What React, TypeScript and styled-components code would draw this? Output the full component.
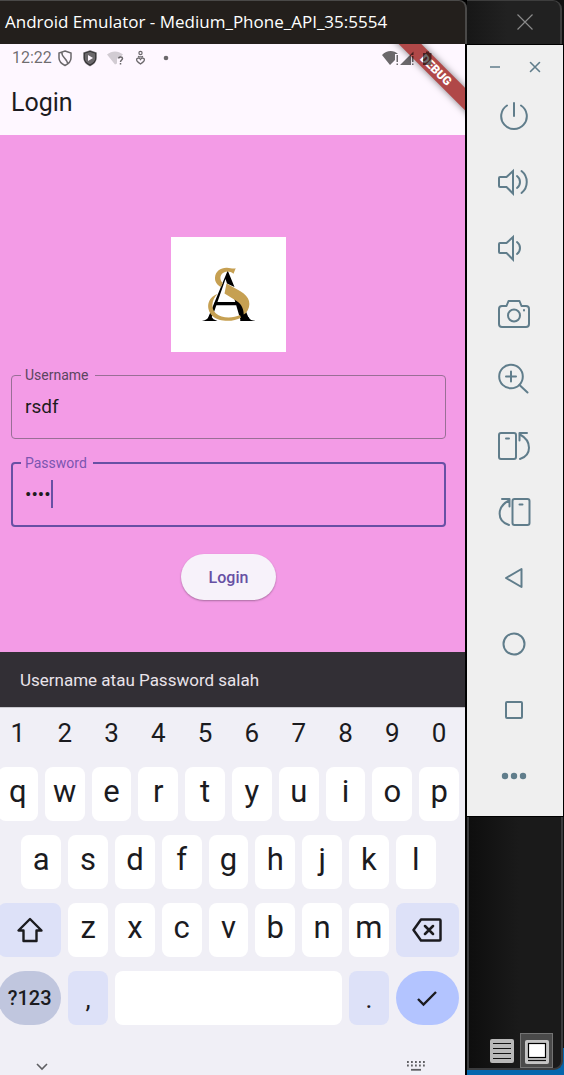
import React from 'react';
import styled, { createGlobalStyle, css } from 'styled-components';

const GlobalStyle = createGlobalStyle`
  *, *::before, *::after { box-sizing: border-box; }
  body { margin: 0; background: #000; font-family: Roboto, "Liberation Sans", sans-serif; }
  button, input { font: inherit; margin: 0; padding: 0; border: 0; background: none; color: inherit; outline: 0; }
`;

const Desktop = styled.div`
  display: grid;
  grid-template-columns: minmax(0, 1fr) 97px;
  min-height: 100vh;
  background: #000;
`;

const Emulator = styled.main`
  display: flex;
  flex-direction: column;
  min-width: 0;
`;

const TitleBar = styled.header`
  display: flex;
  align-items: center;
  height: 44px;
  padding: 0 0 2px 5px;
  border: 1px solid #4a4948;
  border-width: 1px 2px 0 0;
  border-top-right-radius: 8px;
  background: #231f1c;
  color: #fff;
  font: 17px/24px "Open Sans", "Noto Sans", sans-serif;
  white-space: nowrap;
`;

const Phone = styled.div`
  position: relative;
  display: flex;
  flex: 1;
  flex-direction: column;
  overflow: hidden;
  border-right: 2px solid #000;
  background: #f0eff6;
`;

const StatusBar = styled.div`
  position: relative;
  z-index: 2;
  display: flex;
  align-items: center;
  justify-content: space-between;
  height: 27px;
  padding: 0 32px 0 12px;
  color: rgba(0, 0, 0, 0.58);
  font-size: 16px;
  line-height: 27px;
`;

const StatusGroup = styled.div`
  display: flex;
  align-items: center;
  gap: 6px;
`;

const AppTop = styled.div`
  height: 91px;
  background: #fef7ff;
`;

const AppTitle = styled.h1`
  margin: 0;
  padding: 16px 11px 0;
  color: #1d1b20;
  font-size: 25px;
  font-weight: 400;
  line-height: 32px;
`;

const DebugRibbon = styled.div`
  position: absolute;
  z-index: 1;
  top: 18px;
  right: -31px;
  width: 120px;
  height: 16px;
  transform: rotate(45deg);
  background: #b04848;
  box-shadow: 0 0 7px rgba(0, 0, 0, 0.5);
  color: #fff;
  font-size: 12px;
  font-weight: 900;
  line-height: 16px;
  text-align: center;
`;

const LoginForm = styled.form`
  display: flex;
  flex: 1;
  flex-direction: column;
  align-items: center;
  padding: 102px 19px 52px 11px;
  background: #f39be6;
`;

const LogoCard = styled.div`
  width: 115px;
  height: 115px;
  margin-bottom: 15px;
  background: #fff;
`;

const Field = styled.fieldset<{ $focused?: boolean }>`
  width: 100%;
  min-width: 0;
  height: 72px;
  margin: 0 0 16px;
  padding: 0 ${(p) => (p.$focused ? 8 : 9)}px;
  border: ${(p) => (p.$focused ? '2px solid #6750a4' : '1px solid #996f96')};
  border-radius: 4px;

  legend {
    height: 16px;
    padding: 0 6px 0 4px;
    color: ${(p) => (p.$focused ? '#7b55b0' : '#5b4560')};
    font-size: 14px;
    line-height: 16px;
  }
`;

const FieldLine = styled.div`
  display: flex;
  align-items: center;
  height: 30px;
  margin-top: 8px;
  padding-left: 4px;
`;

const TextInput = styled.input<{ $hug?: boolean }>`
  height: 28px;
  color: #1d1b20;
  font-size: 19px;
  ${(p) =>
    p.$hug
      ? css`
          field-sizing: content;
        `
      : css`
          width: 100%;
        `}
`;

const Caret = styled.span`
  width: 2px;
  height: 28px;
  background: #6750a4;
`;

const LoginButton = styled.button`
  height: 46px;
  margin-top: 11px;
  padding: 0 28px;
  border-radius: 23px;
  background: #f7f2fa;
  box-shadow: 0 1px 2px rgba(0, 0, 0, 0.3);
  color: #6750a4;
  font-size: 16px;
  font-weight: 500;
`;

const Snackbar = styled.div`
  padding: 16px 20px 15px;
  background: #322f35;
  color: #e9e3ea;
  font-size: 17px;
  line-height: 24px;
`;

const Keyboard = styled.section`
  margin-left: -2px;
  padding-right: 6px;
  border-top: 1px solid #c9c8ce;
  color: #1b1b1f;
`;

const DigitRow = styled.div`
  display: grid;
  grid-template-columns: repeat(10, 1fr);
  gap: 7px;
  height: 50px;
  margin-bottom: 9px;
  font-size: 26px;
`;

const KeyGrid = styled.div`
  display: grid;
  grid-template-columns: repeat(20, minmax(0, 1fr));
  grid-auto-rows: 54px;
  gap: 14px 7px;
`;

type Tone = 'plain' | 'soft' | 'mode' | 'enter';
const tones: Record<Tone, string> = {
  plain: '#fff',
  soft: '#dde1f8',
  mode: '#c0c6de',
  enter: '#b3c4ff',
};

const Key = styled.button<{ $span?: number; $start?: number; $tone?: Tone }>`
  display: flex;
  align-items: center;
  justify-content: center;
  grid-column: ${(p) => p.$start ?? 'auto'} / span ${(p) => p.$span ?? 2};
  padding-bottom: 4px;
  border-radius: ${(p) => (p.$tone === 'mode' || p.$tone === 'enter' ? 28 : 8)}px;
  background: ${(p) => tones[p.$tone ?? 'plain']};
  font-size: 31px;
  line-height: 40px;
`;

const SymbolKey = styled(Key)`
  align-items: flex-end;
  padding-bottom: 6px;
  font-size: 26px;
`;

const WideKey = styled(Key)`
  padding-bottom: 0;
  font-size: 20px;
  font-weight: 500;
`;

const DigitKey = styled.button`
  text-align: center;
`;

const NavBar = styled.nav`
  display: flex;
  align-items: flex-end;
  justify-content: space-between;
  height: 51px;
  padding: 0 40px 1px 35px;

  button { display: flex; }
`;

const SideColumn = styled.aside`
  display: flex;
  flex-direction: column;
  background: linear-gradient(to top, #0566ad 28px, #101010 28px);
`;

const BackWindowTop = styled.div`
  display: flex;
  align-items: center;
  justify-content: center;
  height: 44px;
  margin-right: 2px;
  padding: 0 0 2px 22px;
  border: 1px solid #3d3d3d;
  border-width: 1px 2px 0 0;
  border-top-right-radius: 9px;
  background: linear-gradient(to right, #171717, #212121 40px);

  button { display: flex; }
`;

const ToolPanel = styled.div`
  display: flex;
  flex-direction: column;
  padding-bottom: 7px;
  border: 1px solid #000;
  border-left: 0;
  background: #efefef;
  color: #607d8b;
`;

const PanelControls = styled.div`
  display: flex;
  align-items: center;
  justify-content: center;
  gap: 24px;
  height: 38px;
  padding-top: 6px;

  button { display: flex; }
`;

const Tool = styled.button`
  display: flex;
  align-items: center;
  justify-content: center;
  height: 66px;
  padding-right: 2px;
`;

const BackWindowBody = styled.div`
  display: flex;
  flex: 1;
  align-items: flex-end;
  justify-content: flex-end;
  gap: 2px;
  margin: 0 1px 6px 0;
  padding-right: 8px;
  border: 2px solid #3b3c3e;
  border-top: 0;
  border-bottom-right-radius: 9px;
  background: linear-gradient(to right, #0e0e0e, #1a1a1a 50px);
`;

const ViewButton = styled.button<{ $active?: boolean }>`
  display: flex;
  align-items: center;
  justify-content: center;
  width: 33px;
  height: 35px;
  padding-top: ${(p) => (p.$active ? 2 : 0)}px;
  border: 1px solid ${(p) => (p.$active ? '#737373' : 'transparent')};
  background: ${(p) => (p.$active ? '#4a4a4a' : 'transparent')};
`;

const Line = ({ children, size = 36, width = 2 }: { children: React.ReactNode; size?: number; width?: number }) => (
  <svg width={size} height={size} viewBox={`0 0 ${size} ${size}`} fill="none" stroke="currentColor" strokeWidth={width} strokeLinecap="round" strokeLinejoin="round" aria-hidden="true">
    {children}
  </svg>
);

const speaker = <path d="M3 14a1 1 0 0 1 1-1h6.500L17 7v22.500L10.500 23H4a1 1 0 0 1-1-1z" strokeLinejoin="miter" />;

const tools: { name: string; art: React.ReactNode }[] = [
  { name: 'Power', art: <><path d="M11 7.500a12.800 12.800 0 1 0 14 0" /><path d="M18 5v13" /></> },
  { name: 'Volume up', art: <>{speaker}<path d="M21 12c4 3 4 9 0 12M25.500 7c7 5.500 7 16.500 0 22" /></> },
  { name: 'Volume down', art: <>{speaker}<path d="M21 12c4 3 4 9 0 12" /></> },
  { name: 'Take screenshot', art: <><path d="M6 10h4.500l2-5h11l2 5H30a3 3 0 0 1 3 3v15a3 3 0 0 1-3 3H6a3 3 0 0 1-3-3V13a3 3 0 0 1 3-3z" /><circle cx="18" cy="19.500" r="6" /><path d="M28 14v.500" /></> },
  { name: 'Zoom', art: <><circle cx="15" cy="14.500" r="11.800" /><path d="M23.500 23l8 7.500M15 9.500v10M10 14.500h10" /></> },
  { name: 'Rotate left', art: <><rect x="3" y="5" width="17" height="26" rx="2" /><path d="M10 10.500h3M24 31c12-4 12-18 0-24.500M31 5h-7.500v7.500" /></> },
  { name: 'Rotate right', art: <><rect x="16.500" y="5" width="17" height="26" rx="2" /><path d="M23.500 10.500h3M13 31C.500 27 .500 13 13 6.500M6 5h7.500v7.500" /></> },
  { name: 'Back', art: <path d="M10 18l15.500-9v18z" /> },
  { name: 'Home', art: <circle cx="18" cy="18" r="10.500" /> },
  { name: 'Overview', art: <rect x="10" y="10" width="16" height="16" rx="1" /> },
  { name: 'More', art: <g fill="currentColor" stroke="none"><circle cx="9" cy="18" r="3.200" /><circle cx="18" cy="18" r="3.200" /><circle cx="27" cy="18" r="3.200" /></g> },
];

const Monogram = () => (
  <svg width="115" height="115" viewBox="0 0 115 115" role="img" aria-label="AS monogram">
    <g fill="#000">
      <path d="M56.700 33.500L63.500 50l-7.500-3.500-1.500-4.500L43 75l-2.500 5.500-3.500.500z" />
      <path d="M44 65h22v3.200H43zM62.500 59l6 1.500c1 1.500 2 3 2.500 4.500l7.500 18h-9z" />
      <path d="M31 84c4-.800 6.500-2.500 8-6l3.500 4.200 4 1.800zM69 84l1.500-3 7-1c1.500 3 3.500 3.500 7.500 4z" />
    </g>
    <g fill="#c6a052">
      <path d="M64.700 31.300l-2.200 5.400c-3.500-3.200-9-3-11.700.300-2.300 3-1.600 6.500 1 9l-1.800 4c-4-2-6.300-5.500-6-9.500.500-6.500 6-10 12-9.700 3.500.200 6 1.300 8.700.500z" />
      <path d="M55.500 46.500L69 54c10 5.500 12 14 6 22l-2.300 1.500c0-7-3.200-11.500-8.700-14.500l-10.500-6.500z" />
      <path d="M46.500 57c-6 5.500-7 15-1.500 19.500 5.500 5 17 5 24 1.500l1 2.700c-8 4.500-22 4.300-28.500-1.700-7-7-5.500-18.500 5-22z" />
    </g>
    <path d="M54.500 46.300l-2.500 9" stroke="#fff" strokeWidth="1" />
  </svg>
);

const letters = (row: string, start: number) =>
  row.split('').map((c, i) => (
    <Key key={c} type="button" $start={start + i * 2}>{c}</Key>
  ));

export default function App() {
  return (
    <Desktop>
      <GlobalStyle />
      <Emulator>
        <TitleBar>Android Emulator - Medium_Phone_API_35:5554</TitleBar>
        <Phone>
          <AppTop>
            <StatusBar>
              <StatusGroup>
                <span>12:22</span>
                <svg width="112" height="18" viewBox="0 0 112 18" fill="none" stroke="currentColor" strokeWidth="1.500" aria-hidden="true">
                  <path d="M7 2l6 2v5c0 4-3 6-6 7.500C4 15 1 13 1 9V4zM4 3.500c-1 5 6 6 5.500 12" />
                  <path d="M32 2l6 2v5c0 4-3 6-6 7.500C29 15 26 13 26 9V4z" fill="currentColor" />
                  <path d="M30 6v6l5-3z" fill="#fef7ff" stroke="none" />
                  <path d="M49 5.500c5-4 11-4 16 0l-3 3-3 1v5l-2 1z" fill="currentColor" stroke="none" opacity=".3" />
                  <path d="M60.500 9.500c.500-2 4-2 4 0 0 1.500-2 1.500-2 3.500M62.500 14v1.500" />
                  <circle cx="82.500" cy="4" r="1.600" strokeWidth="1.200" />
                  <path d="M82.500 15c-3-2-4.500-3.500-3.800-5 1-1.300 2.800-1 3.800.500 1-1.500 2.800-1.800 3.800-.500.700 1.500-.800 3-3.800 5zM80 7.300c1.500.700 3.500.700 5 0" strokeWidth="1.300" />
                  <circle cx="108" cy="9" r="2.300" fill="currentColor" stroke="none" />
                </svg>
              </StatusGroup>
              <svg width="51" height="16" viewBox="0 0 51 16" fill="currentColor" aria-hidden="true">
                <path d="M0 5c4.500-5 12-5 16-1h-3v6l-5 5zM14.500 5h1.500v7h-1.500zM14.500 13.500h1.500V15h-1.500zM18 15L31.500 1.500V5h-2.500v10zM30 6h1.500v6H30zM30 13.500h1.500V15H30zM42 3h2V1.500h3V3h2.500v12H41V3z" />
              </svg>
            </StatusBar>
            <AppTitle>Login</AppTitle>
          </AppTop>
          <DebugRibbon>DEBUG</DebugRibbon>

          <LoginForm onSubmit={(e) => e.preventDefault()}>
            <LogoCard><Monogram /></LogoCard>
            <Field>
              <legend><label htmlFor="username">Username</label></legend>
              <FieldLine><TextInput id="username" type="text" defaultValue="rsdf" /></FieldLine>
            </Field>
            <Field $focused>
              <legend><label htmlFor="password">Password</label></legend>
              <FieldLine>
                <TextInput id="password" type="password" defaultValue="rsdf" $hug />
                <Caret />
              </FieldLine>
            </Field>
            <LoginButton type="submit">Login</LoginButton>
          </LoginForm>

          <Snackbar role="status">Username atau Password salah</Snackbar>

          <Keyboard aria-label="Keyboard">
            <DigitRow>
              {'1234567890'.split('').map((d) => <DigitKey key={d} type="button">{d}</DigitKey>)}
            </DigitRow>
            <KeyGrid>
              {letters('qwertyuiop', 1)}
              {letters('asdfghjkl', 2)}
              <WideKey type="button" $span={3} $start={1} $tone="soft" aria-label="Shift">
                <Line size={28} width={2.4}><path d="M14 3L2.500 14.500H7.500V25h13V14.500h5z" /></Line>
              </WideKey>
              {letters('zxcvbnm', 4)}
              <WideKey type="button" $span={3} $tone="soft" aria-label="Backspace">
                <Line size={30} width={2.5}><path d="M9 4.500h18.500a1 1 0 0 1 1 1v19a1 1 0 0 1-1 1H9L1.500 15zM13 11l8 8M21 11l-8 8" /></Line>
              </WideKey>
              <WideKey type="button" $span={3} $tone="mode">?123</WideKey>
              <SymbolKey type="button" $tone="soft">,</SymbolKey>
              <Key type="button" $span={10} aria-label="Space" />
              <SymbolKey type="button" $tone="soft">.</SymbolKey>
              <WideKey type="button" $span={3} $tone="enter" aria-label="Done">
                <Line size={24} width={2.4}><path d="M3 13l5.500 5.500L21 6" strokeLinecap="butt" strokeLinejoin="miter" /></Line>
              </WideKey>
            </KeyGrid>
          </Keyboard>
          <NavBar>
            <button type="button" aria-label="Hide keyboard">
              <svg width="14" height="16" viewBox="0 0 14 16" fill="none" stroke="#5f5f63" strokeWidth="1.600" aria-hidden="true"><path d="M2 5l5 5 5-5" /></svg>
            </button>
            <button type="button" aria-label="Switch keyboard">
              <svg width="18" height="16" viewBox="0 0 18 16" stroke="#5f5f63" strokeWidth="1.800" aria-hidden="true">
                <path d="M0 3h18M0 6.500h18" strokeDasharray="1.800 2.200" />
                <path d="M4 10.800h10" />
              </svg>
            </button>
          </NavBar>
        </Phone>
      </Emulator>

      <SideColumn>
        <BackWindowTop>
          <button type="button" aria-label="Close">
            <svg width="16" height="16" viewBox="0 0 16 16" stroke="#8a8a8a" strokeWidth="1.200" aria-hidden="true"><path d="M.500 .500l15 15M15.500 .500l-15 15" /></svg>
          </button>
        </BackWindowTop>
        <ToolPanel>
          <PanelControls>
            <button type="button" aria-label="Minimize"><Line size={16}><path d="M3 8h10" strokeLinecap="butt" strokeWidth="1.500" /></Line></button>
            <button type="button" aria-label="Close emulator"><Line size={16}><path d="M3.500 3.500l9 9M12.500 3.500l-9 9" strokeWidth="1.600" /></Line></button>
          </PanelControls>
          {tools.map((t) => (
            <Tool key={t.name} type="button" aria-label={t.name}><Line>{t.art}</Line></Tool>
          ))}
        </ToolPanel>
        <BackWindowBody>
          <ViewButton type="button" aria-label="Details view">
            <svg width="24" height="24" viewBox="0 0 24 24" aria-hidden="true">
              <rect width="24" height="24" rx="2" fill="#b8b8b8" />
              <path d="M3 4.500h18M3 9.500h18M3 14.500h18M3 19.500h18" stroke="#111" strokeWidth="1.200" />
            </svg>
          </ViewButton>
          <ViewButton type="button" $active aria-label="Large icons view">
            <svg width="24" height="24" viewBox="0 0 24 24" aria-hidden="true">
              <rect width="24" height="24" rx="2" fill="#c4c4c4" />
              <rect x="3.500" y="3.500" width="17" height="14" fill="#fff" stroke="#000" strokeWidth="1.200" />
              <path d="M3 20.500h18" stroke="#111" strokeWidth="1.200" />
            </svg>
          </ViewButton>
        </BackWindowBody>
      </SideColumn>
    </Desktop>
  );
}
